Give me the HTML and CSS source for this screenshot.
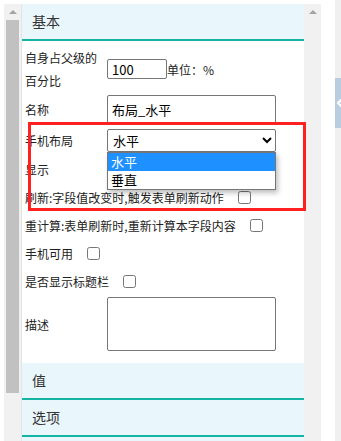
FILE: index.html
```html
<!DOCTYPE html>
<html>
<head>
    <link rel="stylesheet" href="styles.css">
</head>
<body>
    <div class="page">
        <!-- outer scrollbar -->
        <div class="vscroll">
            <div class="arrow-box"><span class="arrow"></span></div>
            <div class="thumb"></div>
        </div>

        <div class="panel">
            <div class="section-head">基本</div>
            <div class="section-body">
                <div class="row row-tall">
                    <label class="label">自身占父级的百分比</label>
                    <input class="input input-short" value="100">
                    <span class="unit">单位：%</span>
                </div>
                <div class="row row-name">
                    <label class="label">名称</label>
                    <input class="input input-wide" value="布局_水平">
                </div>
                <div class="row row-select">
                    <label class="label">手机布局</label>
                    <div class="select-wrap">
                        <select class="select">
                            <option>水平</option>
                            <option>垂直</option>
                        </select>
                        <ul class="options">
                            <li class="option selected">水平</li>
                            <li class="option">垂直</li>
                        </ul>
                    </div>
                </div>
                <div class="row">
                    <span class="label">显示</span>
                </div>
                <div class="row">
                    <span>刷新:字段值改变时,触发表单刷新动作</span>
                    <input type="checkbox" class="check">
                </div>
                <div class="row">
                    <span>重计算:表单刷新时,重新计算本字段内容</span>
                    <input type="checkbox" class="check">
                </div>
                <div class="row">
                    <span>手机可用</span>
                    <input type="checkbox" class="check">
                </div>
                <div class="row">
                    <span>是否显示标题栏</span>
                    <input type="checkbox" class="check">
                </div>
                <div class="row row-desc">
                    <label class="label">描述</label>
                    <textarea class="textarea"></textarea>
                </div>
            </div>
            <div class="section-head">值</div>
            <div class="section-head">选项</div>
            <div class="section-head"></div>
        </div>

        <!-- panel scrollbar -->
        <div class="vscroll">
            <div class="arrow-box"><span class="arrow"></span></div>
        </div>

        <div class="side">
            <div class="side-tab">
                <svg width="20" height="50" viewBox="0 0 20 50">
                    <polyline points="7,21 3,25 7,29" fill="none" stroke="#fff" stroke-width="2"/>
                </svg>
            </div>
        </div>
    </div>

    <!-- annotation box -->
    <div class="highlight"></div>
</body>
</html>
```

FILE: styles.css
```css
body {
    margin: 0;
    padding: 0;
    background: #fff;
    font-family: "Noto Sans CJK SC", "Noto Sans", sans-serif;
    font-size: 12px;
    color: #222;
}

.page {
    display: flex;
    height: 100vh;
    overflow: hidden;
    padding-left: 4px;
}

.vscroll {
    width: 17px;
    flex: none;
    margin-top: 4px;
    background: #f1f1f1;
    display: flex;
    flex-direction: column;
    align-items: center;
}

.arrow-box {
    height: 16px;
    display: flex;
    align-items: center;
    justify-content: center;
}

.arrow {
    width: 0;
    height: 0;
    border-left: 4px solid transparent;
    border-right: 4px solid transparent;
    border-bottom: 4px solid #a3a3a3;
}

.thumb {
    width: 13px;
    height: 373px;
    background: #c1c1c1;
}

.panel {
    width: 282px;
    flex: none;
    margin-top: 4px;
    border-left: 1px solid #e4e4e4;
    overflow: hidden;
}

.section-head {
    height: 35px;
    line-height: 35px;
    padding-left: 10px;
    font-size: 14px;
    color: #333;
    background: #e9f6fb;
    border-bottom: 2px solid #14b3a4;
}

.section-body {
    padding: 4px 0 10px 3px;
}

.row {
    display: flex;
    align-items: center;
    height: 28px;
    line-height: 23px;
}

.row-tall {
    height: 48px;
}

.row-name {
    height: 33px;
}

.row-select {
    height: 29px;
}

.row-desc {
    height: 58px;
}

.label {
    width: 82px;
    flex: none;
    line-height: 23px;
}

.input,
.select,
.textarea {
    box-sizing: border-box;
    font-family: "Noto Sans CJK SC", "Noto Sans", sans-serif;
    font-size: 13px;
    color: #000;
    border: 1px solid #767676;
    border-radius: 2px;
    background: #fff;
    margin: 0;
}

.input {
    padding: 0 4px;
}

.input-short {
    width: 60px;
    height: 20px;
}

.input-wide {
    width: 169px;
    height: 29px;
}

.unit {
    white-space: nowrap;
}

.select-wrap {
    position: relative;
    width: 169px;
    height: 23px;
}

.select {
    width: 169px;
    height: 23px;
    padding: 0 1px;
}

.options {
    position: absolute;
    top: 23px;
    left: 0;
    width: 169px;
    box-sizing: border-box;
    margin: 0;
    padding: 0;
    list-style: none;
    background: #fff;
    border: 1px solid #767676;
    box-shadow: 2px 3px 5px rgba(0, 0, 0, 0.25);
    z-index: 2;
}

.option {
    height: 18px;
    line-height: 18px;
    padding-left: 3px;
    font-size: 13px;
    color: #000;
}

.option.selected {
    background: #1e90ff;
    color: #fff;
}

.check {
    width: 13px;
    height: 13px;
    margin: 0 0 0 14px;
}

.textarea {
    width: 169px;
    height: 54px;
    resize: none;
}

.side {
    width: 20px;
    flex: none;
    margin-left: 14px;
    padding-top: 78px;
    background: #f0f0f0;
}

.side-tab {
    height: 50px;
    background: #b9cde1;
}

.side-tab svg {
    display: block;
}

.highlight {
    position: absolute;
    left: 28px;
    top: 122px;
    width: 278px;
    height: 89px;
    box-sizing: border-box;
    border: 3px solid #ff2020;
    pointer-events: none;
    z-index: 3;
}
```
